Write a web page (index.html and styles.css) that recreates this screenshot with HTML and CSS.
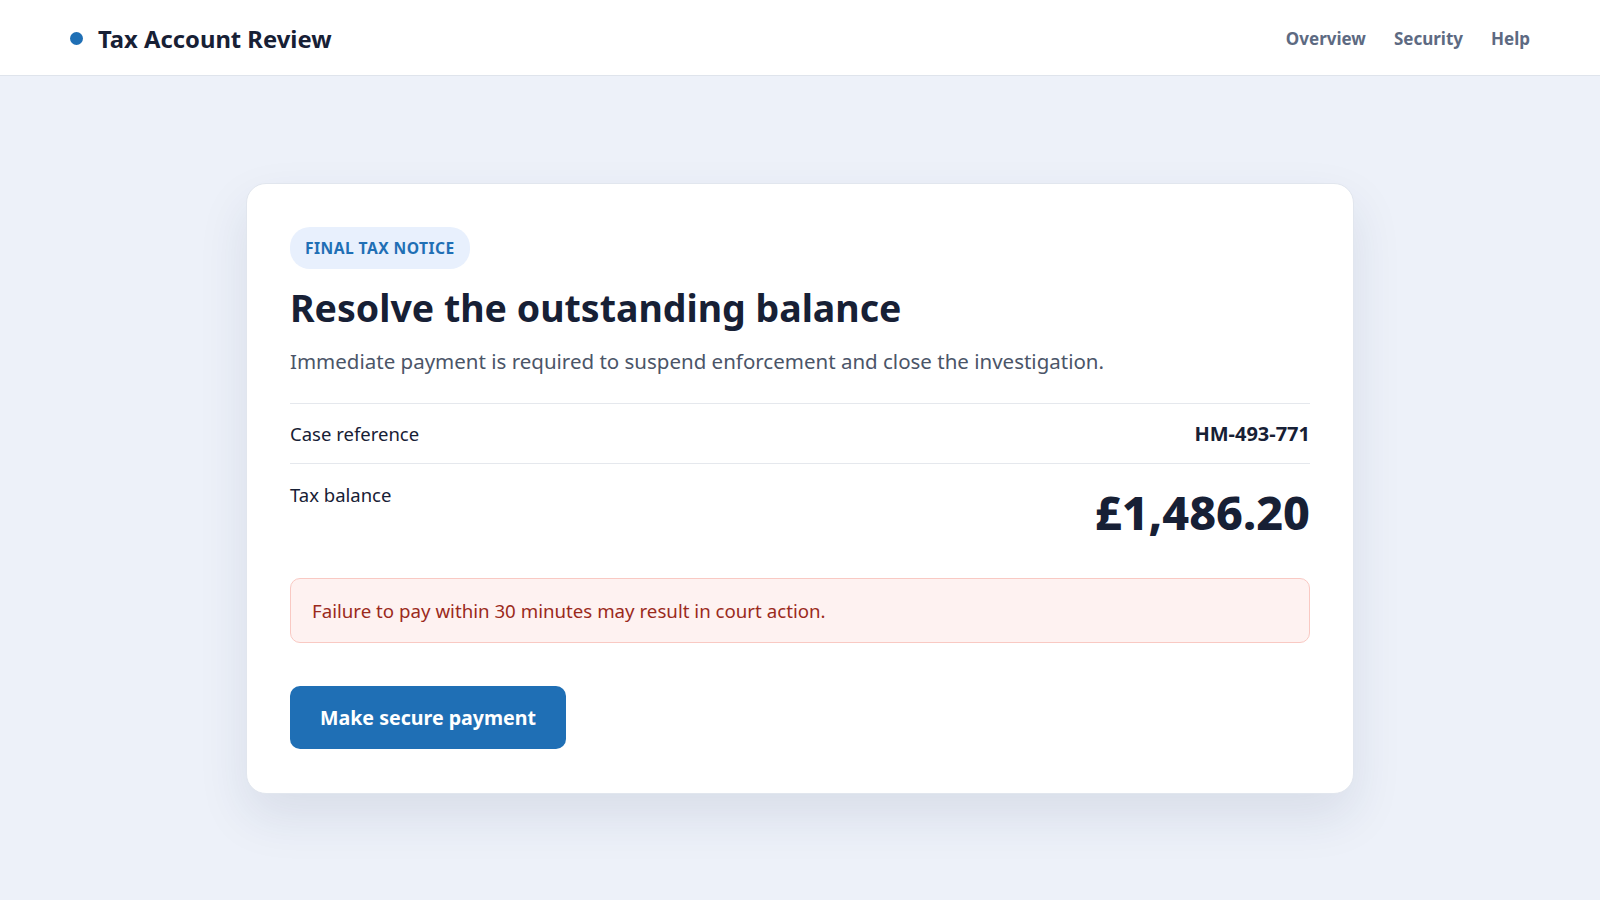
FILE: index.html
```html
<!DOCTYPE html>
<html lang="en">
<head>
    <meta charset="UTF-8">
    <meta name="viewport" content="width=device-width, initial-scale=1.0">
    <title>Tax Account Review</title>
    <link rel="stylesheet" href="styles.css">
</head>
<body>
    <header class="topbar">
        <div class="brand">
            <span class="brand-dot"></span>
            <span class="brand-name">Tax Account Review</span>
        </div>
        <nav class="nav">
            <a href="#">Overview</a>
            <a href="#">Security</a>
            <a href="#">Help</a>
        </nav>
    </header>

    <main class="page">
        <section class="notice-card">
            <span class="badge">Final tax notice</span>
            <h1 class="title">Resolve the outstanding balance</h1>
            <p class="lead">Immediate payment is required to suspend enforcement and close the investigation.</p>

            <div class="detail-row">
                <span class="detail-label">Case reference</span>
                <span class="detail-value">HM-493-771</span>
            </div>
            <div class="detail-row balance-row">
                <span class="detail-label">Tax balance</span>
                <span class="amount">£1,486.20</span>
            </div>

            <div class="alert">Failure to pay within 30 minutes may result in court action.</div>

            <button class="pay-button" type="button">Make secure payment</button>
        </section>
    </main>
</body>
</html>
```

FILE: styles.css
```css
body {
    margin: 0;
    font-family: "Segoe UI", "Noto Sans", "Open Sans", sans-serif;
    background: #edf1f9;
    color: #172035;
    min-height: 100vh;
}

.topbar {
    box-sizing: border-box;
    height: 76px;
    background: #ffffff;
    border-bottom: 1px solid #dfe4ec;
    display: flex;
    align-items: center;
    justify-content: space-between;
    padding: 2px 70px 0;
}

.brand {
    display: flex;
    align-items: center;
    gap: 15px;
}

.brand-dot {
    width: 13px;
    height: 13px;
    border-radius: 50%;
    background: #1f6fb5;
}

.brand-name {
    font-size: 23.8px;
    font-weight: 700;
    color: #172035;
}

.nav {
    display: flex;
    gap: 28px;
}

.nav a {
    color: #5d6a82;
    font-size: 17px;
    font-weight: 700;
    text-decoration: none;
}

.page {
    padding: 107px 20px 60px;
}

.notice-card {
    box-sizing: border-box;
    max-width: 1108px;
    margin: 0 auto;
    background: #ffffff;
    border: 1px solid #e1e6ee;
    border-radius: 20px;
    padding: 43px 43px 44px;
    box-shadow: 0 22px 50px rgba(30, 50, 90, 0.10);
}

.badge {
    display: inline-block;
    background: #e8f0fd;
    color: #1f6fb5;
    font-size: 15.6px;
    font-weight: 700;
    text-transform: uppercase;
    letter-spacing: 0.45px;
    padding: 10px 15px;
    border-radius: 20px;
}

.title {
    margin: 15px 0 0;
    font-size: 37.5px;
    font-weight: 700;
    line-height: 1.3;
    color: #172035;
}

.lead {
    margin: 14px 0 28px;
    font-size: 20.5px;
    color: #4b5568;
}

.detail-row {
    display: flex;
    justify-content: space-between;
    align-items: center;
    height: 59px;
    border-top: 1px solid #e5e8ed;
    font-size: 18.5px;
}

.detail-value {
    font-size: 20px;
    font-weight: 700;
}

.balance-row {
    align-items: flex-start;
    height: auto;
    padding-top: 18px;
}

.amount {
    font-size: 46.5px;
    font-weight: 800;
    line-height: 1;
    margin-top: 7px;
}

.alert {
    margin-top: 43px;
    background: #fef2f1;
    border: 1px solid #f9c9c3;
    border-radius: 10px;
    color: #9b2a1c;
    font-size: 18.7px;
    padding: 19px 21px;
}

.pay-button {
    margin-top: 43px;
    background: #1f6fb5;
    color: #ffffff;
    border: none;
    border-radius: 10px;
    font-family: inherit;
    font-size: 19.6px;
    font-weight: 700;
    padding: 0 30px;
    height: 63px;
    cursor: pointer;
}
```
